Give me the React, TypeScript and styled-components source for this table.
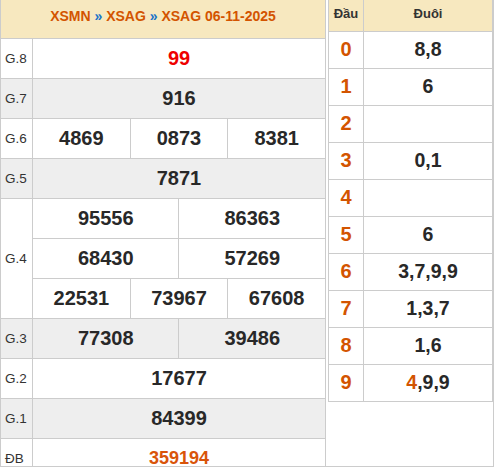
import React from "react";
import styled, { createGlobalStyle } from "styled-components";

const Global = createGlobalStyle`
  html, body { margin: 0; padding: 0; background: #fff; }
  body { font-family: "Liberation Sans", Arial, sans-serif; color: #333; }
`;

const Frame = styled.div`
  display: flex;
  width: 494px;
  height: 467px;
  box-sizing: border-box;
  border-right: 1px solid #ccc;
  border-bottom: 1px solid #ccc;
  overflow: hidden;
`;

const ResultTable = styled.table`
  width: 326px;
  flex: none;
  table-layout: fixed;
  border-collapse: collapse;
  align-self: flex-start;
`;

const HeadCell = styled.th`
  background: #f7e8bf;
  border: 1px solid #ccc;
  border-top: none;
  height: 38px;
  padding: 0 0 6px;
  box-sizing: border-box;
  font-size: 14px;
  font-weight: bold;
  color: #d35400;
  text-align: center;
  vertical-align: middle;
`;

const Sep = styled.span`
  color: #1a73c8;
`;

const Row = styled.tr<{ $alt?: boolean }>`
  background: ${(p) => (p.$alt ? "#eeeeee" : "#ffffff")};
`;

const Label = styled.td`
  border: 1px solid #ccc;
  padding: 0 0 0 4px;
  font-size: 13.5px;
  color: #333;
  height: 40px;
  box-sizing: border-box;
  vertical-align: middle;
`;

const Num = styled.td<{ $tone?: "red" | "orange"; $small?: boolean }>`
  border: 1px solid #ccc;
  padding: 0;
  height: 40px;
  box-sizing: border-box;
  text-align: center;
  vertical-align: middle;
  font-weight: bold;
  font-size: ${(p) => (p.$small ? "18px" : "20px")};
  color: ${(p) =>
    p.$tone === "red" ? "#ee0000" : p.$tone === "orange" ? "#d9540a" : "#282828"};
`;

const Side = styled.div`
  flex: 1;
  padding-left: 2px;
`;

const LotoTable = styled.table`
  width: 100%;
  table-layout: fixed;
  border-collapse: collapse;
`;

const LotoHead = styled.th`
  background: #f7e8bf;
  border: 1px solid #ccc;
  border-top: none;
  height: 31px;
  padding: 0 0 4px;
  box-sizing: border-box;
  font-size: 13px;
  font-weight: bold;
  color: #333;
  text-align: center;
`;

const Head = styled.td`
  border: 1px solid #ccc;
  height: 37px;
  padding: 0;
  box-sizing: border-box;
  text-align: center;
  font-size: 20px;
  font-weight: bold;
  color: #d35400;
`;

const Tail = styled.td`
  border: 1px solid #ccc;
  height: 37px;
  padding: 0;
  box-sizing: border-box;
  text-align: center;
  font-size: 19.5px;
  font-weight: bold;
  color: #282828;
`;

const Hot = styled.span`
  color: #d35400;
`;

const tails: React.ReactNode[] = [
  "8,8",
  "6",
  "",
  "0,1",
  "",
  "6",
  "3,7,9,9",
  "1,3,7",
  "1,6",
  <>
    <Hot>4</Hot>,9,9
  </>,
];

export default function App() {
  return (
    <>
      <Global />
      <Frame>
        <ResultTable>
          <colgroup>
            <col style={{ width: 32 }} />
            <col />
            <col />
            <col />
            <col />
            <col />
            <col />
          </colgroup>
          <thead>
            <tr>
              <HeadCell colSpan={7}>
                XSMN <Sep>»</Sep> XSAG <Sep>»</Sep> XSAG 06-11-2025
              </HeadCell>
            </tr>
          </thead>
          <tbody>
            <Row>
              <Label>G.8</Label>
              <Num colSpan={6} $tone="red">99</Num>
            </Row>
            <Row $alt>
              <Label>G.7</Label>
              <Num colSpan={6}>916</Num>
            </Row>
            <Row>
              <Label>G.6</Label>
              <Num colSpan={2}>4869</Num>
              <Num colSpan={2}>0873</Num>
              <Num colSpan={2}>8381</Num>
            </Row>
            <Row $alt>
              <Label>G.5</Label>
              <Num colSpan={6}>7871</Num>
            </Row>
            <Row>
              <Label rowSpan={3}>G.4</Label>
              <Num colSpan={3}>95556</Num>
              <Num colSpan={3}>86363</Num>
            </Row>
            <Row>
              <Num colSpan={3}>68430</Num>
              <Num colSpan={3}>57269</Num>
            </Row>
            <Row>
              <Num colSpan={2}>22531</Num>
              <Num colSpan={2}>73967</Num>
              <Num colSpan={2}>67608</Num>
            </Row>
            <Row $alt>
              <Label>G.3</Label>
              <Num colSpan={3}>77308</Num>
              <Num colSpan={3}>39486</Num>
            </Row>
            <Row>
              <Label>G.2</Label>
              <Num colSpan={6}>17677</Num>
            </Row>
            <Row $alt>
              <Label>G.1</Label>
              <Num colSpan={6}>84399</Num>
            </Row>
            <Row>
              <Label>ĐB</Label>
              <Num colSpan={6} $tone="orange" $small>
                359194
              </Num>
            </Row>
          </tbody>
        </ResultTable>
        <Side>
          <LotoTable>
            <colgroup>
              <col style={{ width: 35 }} />
              <col />
            </colgroup>
            <thead>
              <tr>
                <LotoHead>Đầu</LotoHead>
                <LotoHead>Đuôi</LotoHead>
              </tr>
            </thead>
            <tbody>
              {tails.map((t, i) => (
                <tr key={i}>
                  <Head>{i}</Head>
                  <Tail>{t}</Tail>
                </tr>
              ))}
            </tbody>
          </LotoTable>
        </Side>
      </Frame>
    </>
  );
}
